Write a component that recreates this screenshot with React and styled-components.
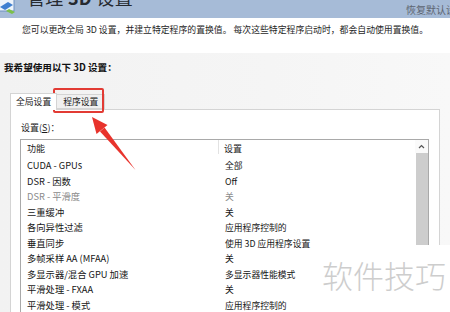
import React from 'react';
import styled, { createGlobalStyle } from 'styled-components';

const rows = [
  { name: 'CUDA - GPUs', value: '全部' },
  { name: 'DSR - 因数', value: 'Off' },
  { name: 'DSR - 平滑度', value: '关', off: true },
  { name: '三重缓冲', value: '关' },
  { name: '各向异性过滤', value: '应用程序控制的' },
  { name: '垂直同步', value: '使用 3D 应用程序设置' },
  { name: '多帧采样 AA (MFAA)', value: '关' },
  { name: '多显示器/混合 GPU 加速', value: '多显示器性能模式' },
  { name: '平滑处理 - FXAA', value: '关' },
  { name: '平滑处理 - 模式', value: '应用程序控制的' },
];

function App() {
  return (
    <Page>
      <Global />
      <Header>
        <TitleWrap>
          <AppIcon width="17" height="16" viewBox="0 0 17 16">
            <rect x="0" y="0" width="15" height="13" fill="#eef3fa" stroke="#6d8fc0" />
            <path d="M1 9 L9 4 L14 7 L6 12 Z" fill="#3f7fd0" />
            <path d="M10 11 L16 14 L13 16 L7 13 Z" fill="#7cc04a" />
          </AppIcon>
          <Title>管理 <b>3D</b> 设置</Title>
        </TitleWrap>
        <Restore>恢复默认设置</Restore>
      </Header>

      <Intro>您可以更改全局 3D 设置，并建立特定程序的置换值。 每次这些特定程序启动时，都会自动使用置换值。</Intro>

      <Panel>
        <Heading>我希望使用以下 3D 设置：</Heading>
        <Tabs>
          <Tab active>全局设置</Tab>
          <Tab>程序设置</Tab>
        </Tabs>
        <TabBody>
          <Label>设置(<u>S</u>)：</Label>
          <ListBox>
            <Table>
              <HeadCell divider>功能</HeadCell>
              <HeadCell>设置</HeadCell>
              {rows.map((r) => (
                <React.Fragment key={r.name}>
                  <Cell off={r.off}>{r.name}</Cell>
                  <Cell off={r.off} value>{r.value}</Cell>
                </React.Fragment>
              ))}
            </Table>
            <Scrollbar>
              <ScrollUp>
                <svg width="7" height="5" viewBox="0 0 7 5">
                  <path d="M1 4 L3.5 1.5 L6 4" fill="none" stroke="#555" strokeWidth="1.2" />
                </svg>
              </ScrollUp>
              <Thumb />
            </Scrollbar>
          </ListBox>
        </TabBody>
      </Panel>

      <RedBox />
      <Arrow width="450" height="312" viewBox="0 0 450 312">
        <polygon points="92,117 96.5,134 107.5,125" fill="#e8332c" />
        <polygon points="100,131.5 104.5,127.5 135.5,170" fill="#e8332c" />
      </Arrow>
      <Watermark>软件技巧</Watermark>
    </Page>
  );
}

export default App;

const Global = createGlobalStyle`
  body {
    margin: 0;
    background: #fff;
    font-family: "Noto Sans CJK SC", "Noto Sans", sans-serif;
  }
`;

const Page = styled.div`
  position: relative;
  width: 450px;
  height: 312px;
  overflow: hidden;
  display: flex;
  flex-direction: column;
`;

const Header = styled.div`
  height: 18px;
  flex-shrink: 0;
  background: #a6bbd7;
  display: flex;
  justify-content: space-between;
  overflow: hidden;
`;

const TitleWrap = styled.div`
  display: flex;
  align-items: flex-start;
`;

const AppIcon = styled.svg`
  margin-top: -2px;
  margin-left: -1px;
`;

const Title = styled.div`
  margin-left: 11px;
  margin-top: -12px;
  font-size: 18px;
  line-height: 18px;
  color: #262a30;
  white-space: nowrap;
  letter-spacing: 0.3px;
`;

const Restore = styled.div`
  margin-top: 4px;
  margin-right: -16px;
  font-size: 10px;
  line-height: 12px;
  color: #5d6470;
  white-space: nowrap;
`;

const Intro = styled.div`
  height: 35px;
  flex-shrink: 0;
  padding: 6px 0 0 22px;
  box-sizing: border-box;
  font-size: 8.85px;
  line-height: 11px;
  color: #1e1e1e;
  white-space: nowrap;
`;

const Panel = styled.div`
  flex: 1;
  background: linear-gradient(90deg, #f2f2f2 0%, #f5f5f5 60%, #f8f8f8 100%);
  display: flex;
  flex-direction: column;
`;

const Heading = styled.div`
  margin: 8px 0 0 4px;
  font-size: 9.6px;
  line-height: 12px;
  font-weight: bold;
  color: #111;
`;

const Tabs = styled.div`
  display: flex;
  align-items: flex-end;
  margin: 19px 0 0 10px;
  height: 17px;
`;

const Tab = styled.div`
  position: relative;
  z-index: ${(p) => (p.active ? 1 : 0)};
  height: ${(p) => (p.active ? '17px' : '15px')};
  margin-bottom: ${(p) => (p.active ? '-1px' : '0')};
  padding: 0 ${(p) => (p.active ? '5px' : '6px')};
  box-sizing: border-box;
  border: 1px solid #d4d4d4;
  border-bottom: ${(p) => (p.active ? 'none' : '1px solid #d4d4d4')};
  border-left: ${(p) => (p.active ? '1px solid #d4d4d4' : 'none')};
  background: ${(p) => (p.active ? '#fff' : '#f0f0f0')};
  font-size: 8.8px;
  line-height: ${(p) => (p.active ? '16px' : '14px')};
  color: #1a1a1a;
  white-space: nowrap;
`;

const TabBody = styled.div`
  flex: 1;
  width: 430px;
  margin-left: 10px;
  box-sizing: border-box;
  border: 1px solid #d4d4d4;
  border-bottom: none;
  background: #fff;
  padding: 12px 0 0 9px;
`;

const Label = styled.div`
  font-size: 9px;
  line-height: 12px;
  color: #1a1a1a;
  padding-left: 1px;
`;

const ListBox = styled.div`
  margin-top: 5px;
  width: 409px;
  height: 200px;
  box-sizing: border-box;
  border: 1px solid #a9a9a9;
  border-bottom: none;
  display: flex;
`;

const Table = styled.div`
  flex: 1;
  display: grid;
  grid-template-columns: 198px 1fr;
  grid-auto-rows: 15.5px;
  grid-template-rows: 18px;
  align-content: start;
`;

const HeadCell = styled.div`
  font-size: 9px;
  line-height: 18px;
  color: #1a1a1a;
  padding-left: ${(p) => (p.divider ? '6px' : '5px')};
  border-right: ${(p) => (p.divider ? '1px solid #e2e2e2' : 'none')};
  margin: ${(p) => (p.divider ? '0 0 4px 0' : '0')};
`;

const Cell = styled.div`
  font-size: ${(p) => (p.value ? '8.8px' : '9.3px')};
  line-height: 15.5px;
  color: ${(p) => (p.off ? '#8a8a8a' : '#161616')};
  padding-left: 6px;
  white-space: nowrap;
`;

const Scrollbar = styled.div`
  width: 13px;
  flex-shrink: 0;
  display: flex;
  flex-direction: column;
  background: #f3f3f3;
`;

const ScrollUp = styled.div`
  height: 13px;
  display: flex;
  align-items: center;
  justify-content: center;
  background: #fafafa;
`;

const Thumb = styled.div`
  height: 93px;
  background: #cdcdcd;
  border-left: 1px solid #fff;
`;

const RedBox = styled.div`
  position: absolute;
  left: 53px;
  top: 88px;
  width: 51px;
  height: 25px;
  box-sizing: border-box;
  border: 2px solid #e23b34;
  border-radius: 2px;
`;

const Arrow = styled.svg`
  position: absolute;
  left: 0;
  top: 0;
  pointer-events: none;
`;

const Watermark = styled.div`
  position: absolute;
  left: 312px;
  top: 245px;
  width: 138px;
  height: 67px;
  background: #fff;
  padding: 12px 0 0 10px;
  box-sizing: border-box;
  font-size: 31px;
  line-height: 36px;
  font-weight: 300;
  color: #cdcdcd;
  white-space: nowrap;
`;
